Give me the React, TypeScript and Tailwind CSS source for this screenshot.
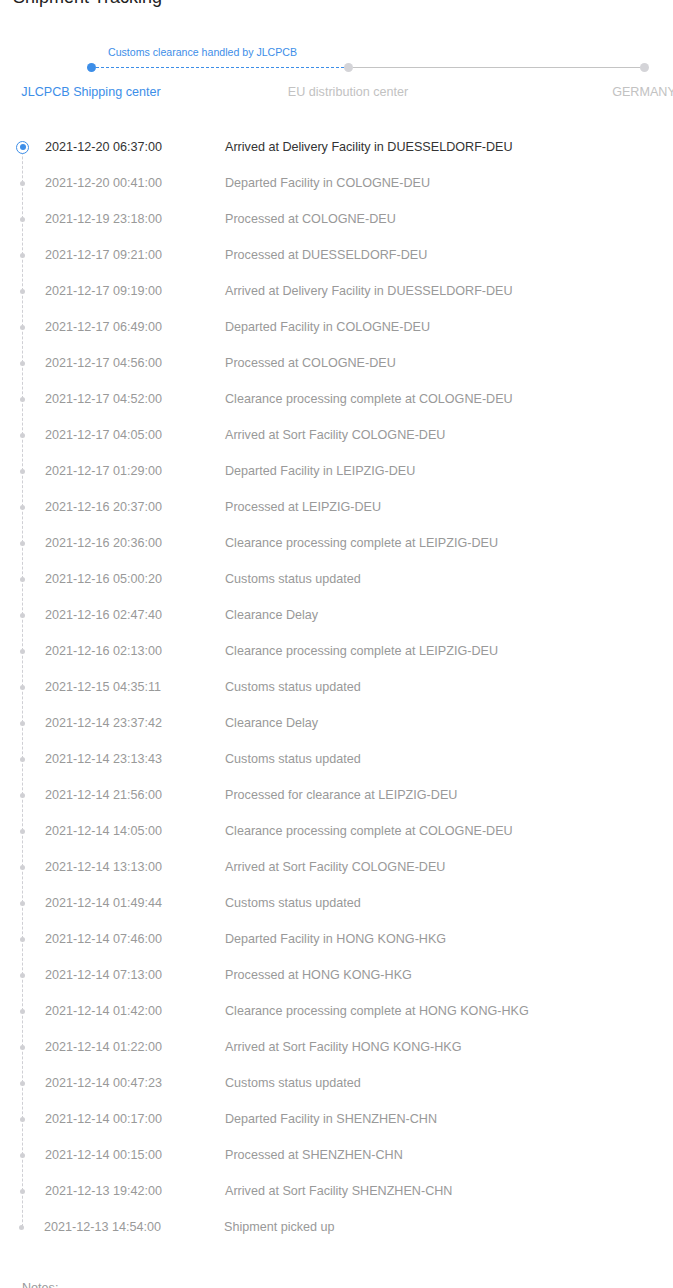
const events: [string, string][] = [
  ["2021-12-20 06:37:00", "Arrived at Delivery Facility in DUESSELDORF-DEU"],
  ["2021-12-20 00:41:00", "Departed Facility in COLOGNE-DEU"],
  ["2021-12-19 23:18:00", "Processed at COLOGNE-DEU"],
  ["2021-12-17 09:21:00", "Processed at DUESSELDORF-DEU"],
  ["2021-12-17 09:19:00", "Arrived at Delivery Facility in DUESSELDORF-DEU"],
  ["2021-12-17 06:49:00", "Departed Facility in COLOGNE-DEU"],
  ["2021-12-17 04:56:00", "Processed at COLOGNE-DEU"],
  ["2021-12-17 04:52:00", "Clearance processing complete at COLOGNE-DEU"],
  ["2021-12-17 04:05:00", "Arrived at Sort Facility COLOGNE-DEU"],
  ["2021-12-17 01:29:00", "Departed Facility in LEIPZIG-DEU"],
  ["2021-12-16 20:37:00", "Processed at LEIPZIG-DEU"],
  ["2021-12-16 20:36:00", "Clearance processing complete at LEIPZIG-DEU"],
  ["2021-12-16 05:00:20", "Customs status updated"],
  ["2021-12-16 02:47:40", "Clearance Delay"],
  ["2021-12-16 02:13:00", "Clearance processing complete at LEIPZIG-DEU"],
  ["2021-12-15 04:35:11", "Customs status updated"],
  ["2021-12-14 23:37:42", "Clearance Delay"],
  ["2021-12-14 23:13:43", "Customs status updated"],
  ["2021-12-14 21:56:00", "Processed for clearance at LEIPZIG-DEU"],
  ["2021-12-14 14:05:00", "Clearance processing complete at COLOGNE-DEU"],
  ["2021-12-14 13:13:00", "Arrived at Sort Facility COLOGNE-DEU"],
  ["2021-12-14 01:49:44", "Customs status updated"],
  ["2021-12-14 07:46:00", "Departed Facility in HONG KONG-HKG"],
  ["2021-12-14 07:13:00", "Processed at HONG KONG-HKG"],
  ["2021-12-14 01:42:00", "Clearance processing complete at HONG KONG-HKG"],
  ["2021-12-14 01:22:00", "Arrived at Sort Facility HONG KONG-HKG"],
  ["2021-12-14 00:47:23", "Customs status updated"],
  ["2021-12-14 00:17:00", "Departed Facility in SHENZHEN-CHN"],
  ["2021-12-14 00:15:00", "Processed at SHENZHEN-CHN"],
  ["2021-12-13 19:42:00", "Arrived at Sort Facility SHENZHEN-CHN"],
  ["2021-12-13 14:54:00", "Shipment picked up"],
];

export default function App() {
  return (
    <div className="h-[1288px] w-[673px] overflow-hidden bg-white font-['Liberation_Sans',Arial,sans-serif]">
      <h1 className="-mt-[15px] pl-[13px] text-[18px] leading-[24px] text-[#222]">Shipment Tracking</h1>

      {/* shipping stages */}
      <section className="mt-[36px]">
        <p className="pl-[108px] text-[10.6px] leading-[14px] text-[#3d8ee8]">Customs clearance handled by JLCPCB</p>
        <div className="mt-[4px] flex items-center pl-[87px]">
          <span className="h-[9px] w-[9px] shrink-0 rounded-full bg-[#3d8ee8]" />
          <span className="w-[248px] shrink-0 border-t border-dashed border-[#3d8ee8]" />
          <span className="h-[9px] w-[9px] shrink-0 rounded-full bg-[#d4d4d8]" />
          <span className="w-[287px] shrink-0 border-t border-[#c4c4c4]" />
          <span className="h-[9px] w-[9px] shrink-0 rounded-full bg-[#d4d4d8]" />
        </div>
        <div className="mt-[12px] flex whitespace-nowrap text-[12.6px] leading-[16px]">
          <span className="w-[182px] shrink-0 text-center text-[#3d8ee8]">JLCPCB Shipping center</span>
          <span className="ml-[86px] w-[160px] shrink-0 text-center text-[#c2c2c2]">EU distribution center</span>
          <span className="ml-[136px] w-[160px] shrink-0 text-center text-[#c2c2c2]">GERMANY</span>
        </div>
      </section>

      {/* tracking events */}
      <ul className="mt-[29px] pl-[16px]">
        {events.map(([time, desc], i) => {
          const first = i === 0;
          const last = i === events.length - 1;
          return (
            <li key={time + desc} className={`relative flex h-[36px] items-center ${last ? "-ml-px" : ""}`}>
              {!last && (
                <span className="absolute left-[6px] top-[18px] h-[36px] border-l border-dashed border-[#cfcfd4]" />
              )}
              <span className="relative flex w-[13px] shrink-0 justify-center">
                {first ? (
                  <span className="flex h-[13px] w-[13px] items-center justify-center rounded-full border border-[#3d8ee8] bg-white">
                    <span className="h-[6px] w-[6px] rounded-full bg-[#3d8ee8]" />
                  </span>
                ) : (
                  <span className="h-[5px] w-[5px] rounded-full bg-[#d0d0d4]" />
                )}
              </span>
              <span className={`ml-[16px] w-[180px] shrink-0 text-[12.6px] ${first ? "text-[#333]" : "text-[#999]"}`}>{time}</span>
              <span className={`text-[12.6px] ${first ? "text-[#333]" : "text-[#999]"}`}>{desc}</span>
            </li>
          );
        })}
      </ul>

      <p className="mt-[35px] pl-[22px] text-[12.6px] leading-[16px] text-[#999]">Notes:</p>
    </div>
  );
}
